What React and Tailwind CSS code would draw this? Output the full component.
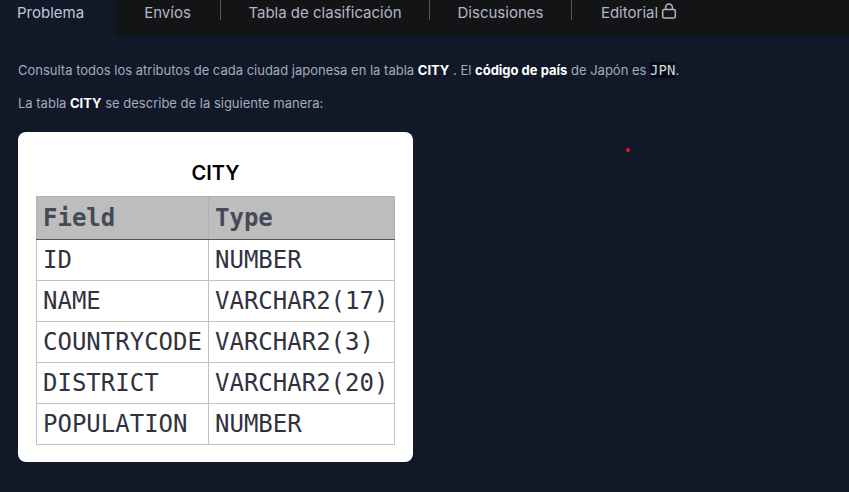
const tabs = [
  { label: "Envíos", width: "w-[106px]" },
  { label: "Tabla de clasificación", width: "w-[209px]" },
  { label: "Discusiones", width: "w-[142px]" },
  { label: "Editorial", width: "w-[134px]", locked: true },
];

const fields = [
  ["ID", "NUMBER"],
  ["NAME", "VARCHAR2(17)"],
  ["COUNTRYCODE", "VARCHAR2(3)"],
  ["DISTRICT", "VARCHAR2(20)"],
  ["POPULATION", "NUMBER"],
];

function LockIcon() {
  return (
    <svg
      className="h-4 w-4 shrink-0"
      viewBox="0 0 16 16"
      fill="none"
      stroke="currentColor"
      strokeWidth="1.5"
      aria-hidden="true"
    >
      <rect x="1.7" y="6.5" width="12.6" height="8.5" rx="1.6" />
      <path d="M4.6 6.5V4.4a3.4 3.4 0 0 1 6.8 0v2.1" />
    </svg>
  );
}

function TabBar() {
  return (
    <nav className="flex h-9 bg-[#131416] text-[15px] leading-5 text-[#b7b4c7]">
      <button
        type="button"
        aria-current="page"
        className="w-[115px] bg-[#111827] pt-[3px] pb-[13px] pl-[17px] text-left text-[#c3c6d8]"
      >
        Problema
      </button>
      {tabs.map((tab) => (
        <button
          key={tab.label}
          type="button"
          className={`flex h-5 items-start justify-center gap-[3px] border-r border-[#57585c] pt-[3px] whitespace-nowrap last:border-r-0 ${tab.width}`}
        >
          {tab.label}
          {tab.locked && <LockIcon />}
        </button>
      ))}
    </nav>
  );
}

function CityTable() {
  return (
    <div className="w-[395px] rounded-lg bg-white px-[18px] pt-[27px] pb-[17px]">
      <table className="w-full table-fixed border-collapse font-['DejaVu_Sans_Mono','Liberation_Mono',monospace] text-2xl leading-8 text-[#30333f]">
        <caption className="pb-[9px] font-['Inter','Liberation_Sans',sans-serif] text-xl leading-7 font-semibold text-black">
          CITY
        </caption>
        <colgroup>
          <col className="w-[172px]" />
          <col />
        </colgroup>
        <thead>
          <tr className="h-[43px] bg-[#bcbdbc] text-left text-[#454958]">
            <th scope="col" className="border border-[#b0b0b0] border-b-[#555555] px-[6px] font-bold">Field</th>
            <th scope="col" className="border border-[#b0b0b0] border-b-[#555555] px-[6px] font-bold">Type</th>
          </tr>
        </thead>
        <tbody>
          {fields.map(([name, type]) => (
            <tr key={name} className="h-[41px]">
              <td className="border border-[#c2c2c2] px-[6px]">{name}</td>
              <td className="border border-[#c2c2c2] px-[6px]">{type}</td>
            </tr>
          ))}
        </tbody>
      </table>
    </div>
  );
}

export default function App() {
  return (
    <div className="relative min-h-screen bg-[#111827] font-['Inter','Liberation_Sans',sans-serif]">
      <TabBar />
      <main className="px-[18px] pt-6 pb-[30px] text-[13px] leading-[21px] text-[#a3adbb]">
        <p>
          Consulta todos los atributos de cada ciudad japonesa en la tabla{" "}
          <strong className="font-bold text-white">CITY</strong> . El{" "}
          <strong className="font-bold text-white">código de país</strong> de Japón es{" "}
          <code className="bg-[#050b18] font-['DejaVu_Sans_Mono','Liberation_Mono',monospace] text-sm leading-4 text-[#d4d8de]">
            JPN
          </code>
          .
        </p>
        <p className="mt-3 mb-[18px]">
          La tabla <strong className="font-bold text-white">CITY</strong> se describe de la siguiente
          manera:
        </p>
        <CityTable />
      </main>
      <span className="absolute top-[148px] left-[626px] h-1 w-1 rounded-full bg-[#e51c1c]" />
    </div>
  );
}
